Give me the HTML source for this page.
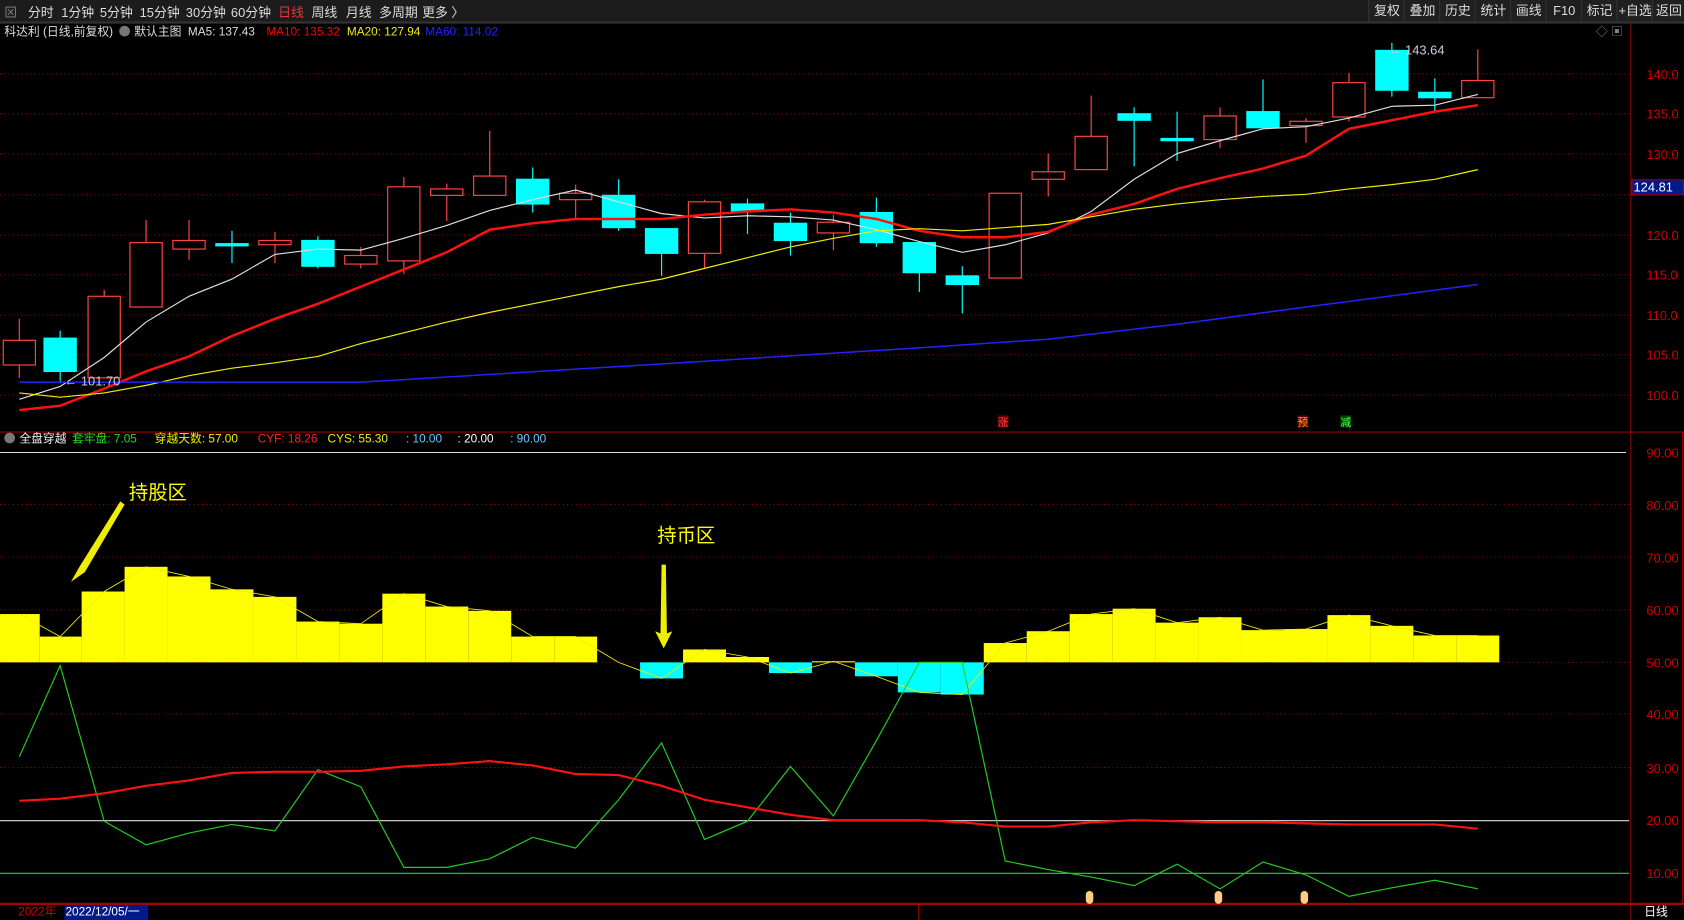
<!DOCTYPE html>
<html><head><meta charset="utf-8"><style>
body{margin:0;width:1684px;height:920px;background:#000;overflow:hidden;font-family:"Liberation Sans","Noto Sans CJK SC",sans-serif;}
#w{position:absolute;left:0;top:0;width:1568px;height:857px;transform:scale(1.07398,1.0735);transform-origin:0 0;}
.tb{position:absolute;left:0;top:0;width:1568px;height:20px;background:#1c1c1c;border-bottom:1px solid #333;}
.tb span{position:absolute;top:3px;font-size:12px;color:#ddd;white-space:nowrap;}
.tb .r{top:0;height:20px;line-height:20px;border-left:1px solid #333;text-align:center;background:#202020;}
</style></head><body><div id="w">
<div class="tb">
<span style="left:4px;color:#888">⊠</span>
<span style="left:26px">分时</span><span style="left:57px">1分钟</span><span style="left:93px">5分钟</span><span style="left:130px">15分钟</span><span style="left:173px">30分钟</span><span style="left:215px">60分钟</span><span style="left:259px;color:#e33">日线</span><span style="left:290px">周线</span><span style="left:322px">月线</span><span style="left:353px">多周期</span><span style="left:393px">更多 〉</span>
<span class="r" style="left:1274px;width:33px">复权</span><span class="r" style="left:1307px;width:33px">叠加</span><span class="r" style="left:1340px;width:33px">历史</span><span class="r" style="left:1373px;width:33px">统计</span><span class="r" style="left:1406px;width:33px">画线</span><span class="r" style="left:1439px;width:33px">F10</span><span class="r" style="left:1472px;width:33px">标记</span><span class="r" style="left:1505px;width:33px">+自选</span><span class="r" style="left:1538px;width:30px">返回</span>
</div>
<svg width="1568" height="857" style="position:absolute;left:0;top:0" font-family="Liberation Sans, Noto Sans CJK SC, sans-serif">
<line x1="0" y1="21.5" x2="1568" y2="21.5" stroke="#333"/>
<text x="4" y="33" font-size="11" fill="#ddd">科达利 (日线,前复权)</text>
<circle cx="116" cy="29" r="5" fill="#777"/>
<text x="125" y="33" font-size="11" fill="#ddd">默认主图</text>
<text x="175" y="33" font-size="11" fill="#ddd">MA5: 137.43</text>
<text x="248" y="33" font-size="11" fill="#f00">MA10: 135.32</text>
<text x="323" y="33" font-size="11" fill="#ee0">MA20: 127.94</text>
<text x="396" y="33" font-size="11" fill="#22f">MA60: 114.02</text>
<text x="1486" y="33" font-size="11" fill="#888">◇ ▣</text>
<line x1="1518.5" y1="22" x2="1518.5" y2="857" stroke="#900"/>
<line x1="1566.5" y1="402" x2="1566.5" y2="842" stroke="#900"/>
<line x1="0" y1="402.5" x2="1568" y2="402.5" stroke="#900"/>
<line x1="0" y1="842" x2="1568" y2="842" stroke="#a00" stroke-width="2"/>
<g stroke="#900" stroke-dasharray="1,3">
<line x1="0" y1="69" x2="1517" y2="69"/><line x1="0" y1="106" x2="1517" y2="106"/><line x1="0" y1="143.5" x2="1517" y2="143.5"/><line x1="0" y1="181.5" x2="1517" y2="181.5"/><line x1="0" y1="219" x2="1517" y2="219"/><line x1="0" y1="256" x2="1517" y2="256"/><line x1="0" y1="293.5" x2="1517" y2="293.5"/><line x1="0" y1="330.5" x2="1517" y2="330.5"/><line x1="0" y1="368" x2="1517" y2="368"/>
<line x1="0" y1="470" x2="1517" y2="470"/><line x1="0" y1="519" x2="1517" y2="519"/><line x1="0" y1="568" x2="1517" y2="568"/><line x1="0" y1="617" x2="1517" y2="617"/><line x1="0" y1="665" x2="1517" y2="665"/><line x1="0" y1="715" x2="1517" y2="715"/>
</g>
<g font-size="12" fill="#c00">
<text x="1533" y="73.5">140.0</text><text x="1533" y="110.5">135.0</text><text x="1533" y="148">130.0</text><text x="1533" y="223.5">120.0</text><text x="1533" y="260.5">115.0</text><text x="1533" y="298">110.0</text><text x="1533" y="335">105.0</text><text x="1533" y="372.5">100.0</text>
<text x="1533" y="426">90.00</text><text x="1533" y="475">80.00</text><text x="1533" y="524">70.00</text><text x="1533" y="573">60.00</text><text x="1533" y="622">50.00</text><text x="1533" y="670">40.00</text><text x="1533" y="720">30.00</text><text x="1533" y="768.5">20.00</text><text x="1533" y="818">10.00</text>
</g>
<rect x="1519.5" y="167.5" width="48" height="14" fill="#001a8a" stroke="#a00"/>
<text x="1521" y="178.5" font-size="12" fill="#fff">124.81</text>
<g stroke-width="1.1" id="c"></g>
<polyline fill="none" stroke="#ddd" stroke-width="1.1" points="18,372 56,360 97,333 136,300 176,276 216,260 256,237 296,232 336,233 376,222 416,210 456,196 496,186 536,177 576,188 616,199 656,203 696,201 736,202 776,205 816,214 856,225 896,235 936,228 976,217 1016,197 1056,167 1096,143 1136,131 1176,120 1216,118 1256,110 1296,99 1336,98 1376,88"/>
<polyline fill="none" stroke="#f11" stroke-width="2.3" points="18,382 56,378 97,362 136,346 176,332 216,313 256,297 296,283 336,267 376,251 416,235 456,214 496,208 536,204 576,204 616,204 656,200 696,197 736,195 776,198 816,204 856,215 896,221 936,221 976,216 1016,200 1056,190 1096,176 1136,166 1176,157 1216,145 1256,120 1296,112 1336,104 1376,98"/>
<polyline fill="none" stroke="#ee0" stroke-width="1.1" points="18,366 56,370 97,366 136,359 176,350 216,343 256,338 296,332 336,320 376,310 416,300 456,291 496,283 536,275 576,267 616,260 656,250 696,240 736,230 776,222 816,215 856,213 896,215 936,212 976,209 1016,202 1056,195 1096,190 1136,186 1176,183 1216,181 1256,176 1296,172 1336,167 1376,158"/>
<polyline fill="none" stroke="#22f" stroke-width="1.4" points="18,356 336,356 600,340 856,324 976,316 1096,302 1216,286 1376,265"/>
<text x="60" y="359" font-size="12" fill="#ccd">← 101.70</text>
<text x="1293" y="51" font-size="12" fill="#ccd">← 143.64</text>
<rect x="929" y="387" width="10" height="11" fill="#600"/><text x="929" y="397" font-size="10" fill="#f44">涨</text>
<rect x="1208" y="387" width="10" height="11" fill="#600"/><text x="1208" y="397" font-size="10" fill="#fa0">预</text>
<rect x="1248" y="387" width="10" height="11" fill="#040"/><text x="1248" y="397" font-size="10" fill="#4f4">减</text>
<circle cx="9" cy="408" r="5" fill="#777"/>
<text x="18" y="412" font-size="11" fill="#eee">全盘穿越</text>
<text x="67" y="412" font-size="11" fill="#2d2">套牢盘: 7.05</text>
<text x="144" y="412" font-size="11" fill="#ee0">穿越天数: 57.00</text>
<text x="240" y="412" font-size="11" fill="#f22">CYF: 18.26</text>
<text x="305" y="412" font-size="11" fill="#ee0">CYS: 55.30</text>
<text x="378" y="412" font-size="11" fill="#6cf">: 10.00</text>
<text x="426" y="412" font-size="11" fill="#fff">: 20.00</text>
<text x="475" y="412" font-size="11" fill="#6cf">: 90.00</text>
<line x1="0" y1="421.5" x2="1514" y2="421.5" stroke="#ddd"/>
<g id="b"></g>
<polyline fill="none" stroke="#ee0" stroke-width="0.8" points="18,572 56,593 97,551 136,528 176,537 216,549 256,556 296,579 336,581 376,553 416,565 456,569 496,593 536,593 576,617 616,632 656,605 696,612 736,627 776,616 816,630 856,645 896,647 936,599 976,588 1016,572 1056,567 1096,580 1136,575 1176,587 1216,586 1256,573 1296,583 1336,592 1376,592"/>
<line x1="0" y1="764.5" x2="1517" y2="764.5" stroke="#ddd"/>
<line x1="0" y1="813.5" x2="1517" y2="813.5" stroke="#2d2"/>
<polyline fill="none" stroke="#2c2" stroke-width="1.1" points="18,705 56,620 97,765 136,787 176,776 216,768 256,774 296,717 336,733 376,808 416,808 456,800 496,780 536,790 576,745 616,692 656,782 696,765 736,714 776,760 816,690 856,617 896,617 936,802 976,810 1016,817 1056,825 1096,805 1136,828 1176,803 1216,815 1256,835 1296,827 1336,820 1376,828"/>
<polyline fill="none" stroke="#f11" stroke-width="2" points="18,746 56,744 97,739 136,732 176,727 216,720 256,719 296,719 336,718 376,714 416,712 456,709 496,713 536,721 576,722 616,732 656,745 696,752 736,759 776,764 816,764 856,764 896,766 936,770 976,770 1016,766 1056,764 1096,765 1136,766 1176,766 1216,767 1256,768 1296,768 1336,768 1376,772"/>
<text x="120" y="465" font-size="18" fill="#ff0">持股区</text>
<polygon points="116,470 112,467 74,528 66,542 79,533" fill="#ee0"/>
<text x="612" y="505" font-size="18" fill="#ff0">持币区</text>
<polygon points="616,526 620,526 621,590 626,588 618,604 610,588 615,590" fill="#ee0"/>
<g fill="#fc8"><rect x="1011" y="830" width="7" height="12" rx="3.5"/><rect x="1131" y="830" width="7" height="12" rx="3.5"/><rect x="1211" y="830" width="7" height="12" rx="3.5"/></g>
<text x="17" y="853" font-size="11" fill="#c00">2022年</text>
<rect x="60" y="843" width="78" height="14" fill="#001a8a"/>
<text x="61" y="853" font-size="11" fill="#fff">2022/12/05/一</text>
<line x1="855.5" y1="843" x2="855.5" y2="857" stroke="#a00"/>
<text x="1531" y="853" font-size="11" fill="#fff">日线</text>
</svg></div>
<script>
var C=[[18,317,340,297,352,1],[56,315,346,308,357,0],[97,276,352,270,352,1],[136,226,286,205,286,1],[176,224,232,205,242,1],[216,227,229,215,245,0],[256,224,228,216,245,1],[296,224,248,220,250,0],[336,238,246,230,250,1],[376,174,243,165,255,1],[416,176,182,171,206,1],[456,164,182,122,182,1],[496,167,190,156,198,0],[536,180,186,172,205,1],[576,182,212,167,215,0],[616,213,236,213,257,0],[656,188,236,186,250,1],[696,190,197,185,218,0],[736,208,224,198,238,0],[776,207,217,200,233,1],[816,198,226,184,230,0],[856,226,254,226,272,0],[896,257,265,248,292,0],[936,180,259,180,259,1],[976,160,167,143,183,1],[1016,127,158,89,158,1],[1056,106,112,100,155,0],[1096,129,131,104,150,0],[1136,108,130,100,138,1],[1176,104,119,74,119,0],[1216,113,117,110,133,1],[1256,77,109,68,113,1],[1296,47,84,40,90,0],[1336,86,91,73,103,0],[1376,75,91,46,91,1]];
var s='';C.forEach(function(c){var col=c[5]?'#f44':'#0ff';s+='<line x1="'+c[0]+'" y1="'+c[3]+'" x2="'+c[0]+'" y2="'+c[4]+'" stroke="'+col+'"/>';s+='<rect x="'+(c[0]-15)+'" y="'+c[1]+'" width="30" height="'+Math.max(1,c[2]-c[1])+'" fill="'+(c[5]?'#000':'#0ff')+'" stroke="'+col+'"/>';});
document.getElementById('c').innerHTML=s;
var B=[[0,37,572],[37,76,593],[76,116,551],[116,156,528],[156,196,537],[196,236,549],[236,276,556],[276,316,579],[316,356,581],[356,396,553],[396,436,565],[436,476,569],[476,516,593],[516,556,593],[596,636,632],[636,676,605],[676,716,612],[716,756,627],[756,796,616],[796,836,630],[836,876,645],[876,916,647],[916,956,599],[956,996,588],[996,1036,572],[1036,1076,567],[1076,1116,580],[1116,1156,575],[1156,1196,587],[1196,1236,586],[1236,1276,573],[1276,1316,583],[1316,1356,592],[1356,1396,592]];
var t='';B.forEach(function(b){var y=Math.min(b[2],617),h=Math.abs(617-b[2]);t+='<rect x="'+b[0]+'" y="'+y+'" width="'+(b[1]-b[0])+'" height="'+Math.max(h,1)+'" fill="'+(b[2]>617?'#0ff':'#ff0')+'"/>';});
document.getElementById('b').innerHTML=t;
</script>
</body></html>
